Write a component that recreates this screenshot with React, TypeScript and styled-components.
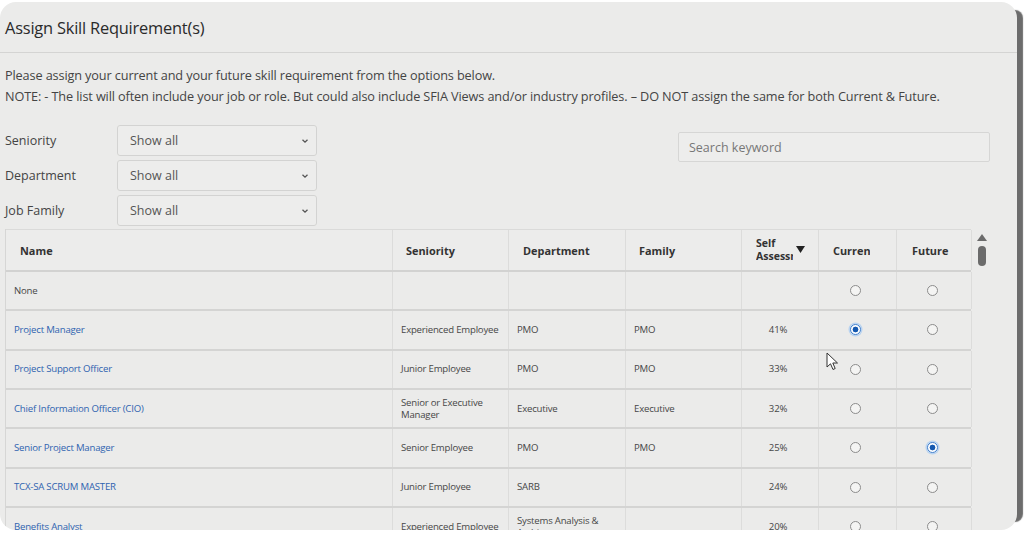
import React from "react";
import styled, { createGlobalStyle } from "styled-components";

const GlobalStyle = createGlobalStyle`
  html, body {
    margin: 0;
    padding: 0;
    background: #ffffff;
  }
  body {
    font-family: "Open Sans", "Noto Sans", "Liberation Sans", sans-serif;
    color: #3b3b3b;
  }
`;

const Page = styled.div`
  width: 1024px;
  height: 535px;
  padding-top: 2px;
  box-sizing: border-box;
  overflow: hidden;
`;

const Panel = styled.section`
  position: relative;
  width: 1017px;
  height: 528px;
  background: #ebebea;
  border-radius: 16px;
  box-shadow: 14px 0 1px -8px #6c6c6c;
  overflow: hidden;
  display: flex;
  flex-direction: column;
`;

const Header = styled.header`
  height: 50px;
  display: flex;
  align-items: center;
  padding-left: 5px;
  border-bottom: 1px solid #d4d4d3;
  flex-shrink: 0;
`;

const Heading = styled.h1`
  margin: 0;
  font-size: 16.4px;
  font-weight: 400;
  color: #2a2a2a;
  letter-spacing: -0.2px;
`;

const Body = styled.div`
  padding: 12px 27px 0 5px;
  display: flex;
  flex-direction: column;
  min-height: 0;
  flex: 1;
`;

const Intro = styled.p`
  margin: 0;
  font-size: 12.7px;
  line-height: 21px;
  color: #444;
  letter-spacing: -0.12px;
`;

const Filters = styled.div`
  display: flex;
  justify-content: space-between;
  align-items: flex-start;
  margin-top: 18px;
`;

const FilterGrid = styled.div`
  display: grid;
  grid-template-columns: 112px 200px;
  row-gap: 4px;
  align-items: center;
`;

const FilterLabel = styled.label`
  font-size: 12.5px;
  color: #444;
`;

const Select = styled.div`
  height: 31px;
  box-sizing: border-box;
  border: 1px solid #d3d3d2;
  border-radius: 3px;
  background: #ededec;
  display: flex;
  align-items: center;
  justify-content: space-between;
  padding: 0 6px 0 12px;
  font-size: 12.5px;
  color: #555;
`;

const Search = styled.div`
  width: 312px;
  height: 30px;
  box-sizing: border-box;
  margin-top: 7px;
  border: 1px solid #d6d6d5;
  border-radius: 2px;
  background: #ededec;
  display: flex;
  align-items: center;
  padding-left: 10px;
  font-size: 12.5px;
  color: #777;
`;

const TableArea = styled.div`
  position: relative;
  display: flex;
  margin-top: 3px;
`;

const Table = styled.div`
  width: 966px;
  border-left: 1px solid #d6d6d5;
  box-sizing: border-box;
`;

const cols = "387px 116px 117px 116px 77px 78px 75px";

const HeadRow = styled.div`
  display: grid;
  grid-template-columns: ${cols};
  height: 43px;
  box-sizing: border-box;
  border-top: 1px solid #dadad9;
  border-bottom: 2px solid #d2d2d1;
  background: #ececeb;
`;

const HeadCell = styled.div<{ $pad?: number }>`
  display: flex;
  align-items: center;
  padding-left: ${({ $pad }) => $pad ?? 14}px;
  border-right: 1px solid #dcdcdb;
  font-size: 10.9px;
  font-weight: 700;
  color: #333;
  overflow: hidden;
  white-space: nowrap;
`;

const Clip = styled.span<{ $w: number }>`
  display: inline-block;
  width: ${({ $w }) => $w}px;
  overflow: hidden;
`;

const SortHead = styled.div`
  display: flex;
  align-items: center;
  gap: 3px;
  line-height: 13px;
  font-size: 10.5px;
`;

const Row = styled.div`
  display: grid;
  grid-template-columns: ${cols};
  height: 39.33px;
  box-sizing: border-box;
  border-bottom: 2px solid #d4d4d3;
`;

const Cell = styled.div<{ $center?: boolean; $link?: boolean }>`
  display: flex;
  align-items: center;
  justify-content: ${({ $center }) => ($center ? "center" : "flex-start")};
  padding-left: ${({ $center }) => ($center ? 0 : 8)}px;
  padding-right: 4px;
  border-right: 1px solid #dcdcdb;
  font-size: 9.6px;
  line-height: 12px;
  letter-spacing: -0.2px;
  color: ${({ $link }) => ($link ? "#2f63b0" : "#474747")};
`;

const Radio = styled.span<{ $checked?: boolean }>`
  width: 11px;
  height: 11px;
  box-sizing: border-box;
  border-radius: 50%;
  border: 1px solid ${({ $checked }) => ($checked ? "#3f7fcf" : "#8c8c8c")};
  background: ${({ $checked }) =>
    $checked
      ? "radial-gradient(circle, #1458b0 0 2.6px, #ffffff 3.2px)"
      : "#f4f4f3"};
  box-shadow: ${({ $checked }) => ($checked ? "0 0 0 1.5px #b9d3f0" : "none")};
`;

const Scrollbar = styled.div`
  width: 19px;
  display: flex;
  flex-direction: column;
  align-items: center;
  padding-top: 5px;
  gap: 5px;
  padding-left: 2px;
`;

const Thumb = styled.div`
  width: 8px;
  height: 20px;
  border-radius: 4px;
  background: #6b6b6b;
`;

const Cursor = styled.svg`
  position: absolute;
  left: 821px;
  top: 123px;
`;

const Chevron = () => (
  <svg width="10" height="10" viewBox="0 0 10 10">
    <path d="M2.5 3.8 L5 6.2 L7.5 3.8" fill="none" stroke="#555" strokeWidth="1.3" />
  </svg>
);

type Skill = {
  name: string;
  link?: boolean;
  seniority: string;
  department: string;
  family: string;
  self: string;
  current?: boolean;
  future?: boolean;
};

const skills: Skill[] = [
  { name: "None", seniority: "", department: "", family: "", self: "" },
  { name: "Project Manager", link: true, seniority: "Experienced Employee", department: "PMO", family: "PMO", self: "41%", current: true },
  { name: "Project Support Officer", link: true, seniority: "Junior Employee", department: "PMO", family: "PMO", self: "33%" },
  { name: "Chief Information Officer (CIO)", link: true, seniority: "Senior or Executive Manager", department: "Executive", family: "Executive", self: "32%" },
  { name: "Senior Project Manager", link: true, seniority: "Senior Employee", department: "PMO", family: "PMO", self: "25%", future: true },
  { name: "TCX-SA SCRUM MASTER", link: true, seniority: "Junior Employee", department: "SARB", family: "", self: "24%" },
  { name: "Benefits Analyst", link: true, seniority: "Experienced Employee", department: "Systems Analysis & Architecture", family: "", self: "20%" },
];

const filters = ["Seniority", "Department", "Job Family"];

function App() {
  return (
    <Page>
      <GlobalStyle />
      <Panel>
        <Header>
          <Heading>Assign Skill Requirement(s)</Heading>
        </Header>
        <Body>
          <Intro>
            Please assign your current and your future skill requirement from the options below.
            <br />
            NOTE: - The list will often include your job or role. But could also include SFIA Views and/or industry profiles. – DO NOT assign the same for both Current &amp; Future.
          </Intro>
          <Filters>
            <FilterGrid>
              {filters.map((f) => (
                <React.Fragment key={f}>
                  <FilterLabel>{f}</FilterLabel>
                  <Select>
                    Show all
                    <Chevron />
                  </Select>
                </React.Fragment>
              ))}
            </FilterGrid>
            <Search>Search keyword</Search>
          </Filters>
          <TableArea>
            <Table>
              <HeadRow>
                <HeadCell>Name</HeadCell>
                <HeadCell $pad={13}>Seniority</HeadCell>
                <HeadCell>Department</HeadCell>
                <HeadCell $pad={13}>Family</HeadCell>
                <HeadCell>
                  <SortHead>
                    <Clip $w={37}>
                      Self
                      <br />
                      Assessment
                    </Clip>
                    <svg width="9" height="8" viewBox="0 0 9 8">
                      <path d="M0 0 H9 L4.5 7 Z" fill="#222" />
                    </svg>
                  </SortHead>
                </HeadCell>
                <HeadCell>
                  <Clip $w={37}>Current</Clip>
                </HeadCell>
                <HeadCell $pad={15}>Future</HeadCell>
              </HeadRow>
              {skills.map((s) => (
                <Row key={s.name}>
                  <Cell $link={s.link}>{s.name}</Cell>
                  <Cell>{s.seniority}</Cell>
                  <Cell>{s.department}</Cell>
                  <Cell>{s.family}</Cell>
                  <Cell $center>{s.self}</Cell>
                  <Cell $center>
                    <Radio $checked={s.current} />
                  </Cell>
                  <Cell $center>
                    <Radio $checked={s.future} />
                  </Cell>
                </Row>
              ))}
            </Table>
            <Scrollbar>
              <svg width="10" height="7" viewBox="0 0 10 7">
                <path d="M0 7 L5 0 L10 7 Z" fill="#6b6b6b" />
              </svg>
              <Thumb />
            </Scrollbar>
            <Cursor width="14" height="20" viewBox="0 0 14 20">
              <path
                d="M1 1 L1 15 L4.5 11.8 L7 17.5 L9.2 16.5 L6.8 11 L11.5 11 Z"
                fill="#ffffff"
                stroke="#333"
                strokeWidth="1"
                strokeLinejoin="round"
              />
            </Cursor>
          </TableArea>
        </Body>
      </Panel>
    </Page>
  );
}

export default App;
